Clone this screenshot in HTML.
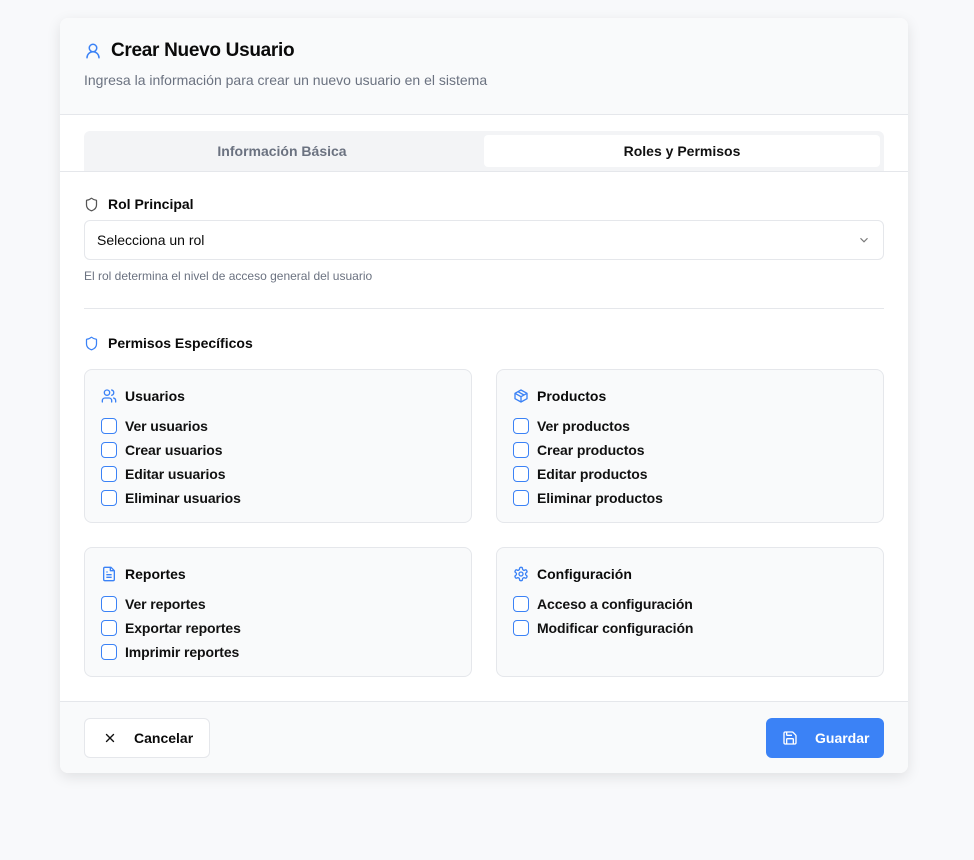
<!DOCTYPE html>
<html><head><meta charset="utf-8"><style>
*{box-sizing:border-box;margin:0;padding:0}
body{width:974px;height:860px;background:#f8f9fb;font-family:"Liberation Sans",sans-serif;color:#0a0a0a;position:relative}
.card{position:absolute;left:60px;top:18px;width:848px;height:755px;background:#fff;border-radius:8px;box-shadow:0 4px 14px rgba(0,0,0,.1);overflow:hidden}
.hdr{height:97px;background:#f9fafb;border-bottom:1px solid #e5e7eb;position:relative}
.title{position:absolute;left:24px;top:22px;display:flex;align-items:center;gap:9px;font-size:19px;font-weight:bold;letter-spacing:-.3px}
.sub{position:absolute;left:24px;top:54px;font-size:14px;color:#6b7280}
.tabsw{height:57px;border-bottom:1px solid #e5e7eb;position:relative}
.tabs{position:absolute;left:24px;top:16px;width:800px;height:40px;background:#f3f4f6;border-radius:6px 6px 0 0}
.tab{position:absolute;top:4px;height:32px;width:396px;font-size:14px;font-weight:bold;display:flex;align-items:center;justify-content:center}
.t1{left:0;color:#6b7280}.t2{left:400px;background:#fff;border-radius:4px;color:#111}
.lbl{position:absolute;left:24px;display:flex;align-items:center;gap:9px;font-size:14px;font-weight:bold}
.sel{position:absolute;left:24px;top:202px;width:800px;height:40px;border:1px solid #e5e7eb;border-radius:6px;font-size:14px;padding:0 12px;display:flex;align-items:center;justify-content:space-between}
.help{position:absolute;left:24px;top:251px;font-size:12px;color:#6b7280}
.hr{position:absolute;left:24px;top:290px;width:800px;height:1px;background:#e5e7eb}
.box{position:absolute;width:388px;background:#f9fafb;border:1px solid #e5e7eb;border-radius:8px;padding:0 16px}
.bh{display:flex;align-items:center;gap:8px;font-size:14px;font-weight:bold;margin-top:18px;margin-bottom:10px;height:16px}
.it{display:flex;align-items:center;gap:8px;font-size:14px;font-weight:bold;height:24px;color:#111;letter-spacing:-.1px}
.cb{width:16px;height:16px;border:1.3px solid #3b82f6;border-radius:4px;background:#fff}
.ftr{position:absolute;left:0;top:683px;width:848px;height:72px;background:#f9fafb;border-top:1px solid #e5e7eb}
.btn{position:absolute;top:16px;height:40px;border-radius:6px;font-size:14px;font-weight:bold;display:flex;align-items:center}
</style></head><body>
<div class="card">
<div class="hdr">
<div class="title"><svg width="18" height="18" viewBox="0 0 24 24" fill="none" stroke="#3b82f6" stroke-width="2" stroke-linecap="round"><circle cx="12" cy="8" r="5"/><path d="M20 21a8 8 0 0 0-16 0"/></svg>Crear Nuevo Usuario</div>
<div class="sub">Ingresa la información para crear un nuevo usuario en el sistema</div>
</div>
<div class="tabsw"><div class="tabs"><div class="tab t1">Información Básica</div><div class="tab t2">Roles y Permisos</div></div></div>
<div class="lbl" style="top:178px"><svg width="15" height="15" viewBox="0 0 24 24" fill="none" stroke="#555" stroke-width="2" stroke-linejoin="round"><path d="M20 13c0 5-3.5 7.5-7.7 9a1 1 0 0 1-.6 0C7.5 20.5 4 18 4 13V6a1 1 0 0 1 1-1c2 0 4.5-1.2 6.2-2.7a1.2 1.2 0 0 1 1.5 0C14.5 3.8 17 5 19 5a1 1 0 0 1 1 1z"/></svg>Rol Principal</div>
<div class="sel"><span>Selecciona un rol</span><svg width="14" height="14" viewBox="0 0 24 24" fill="none" stroke="#777" stroke-width="2"><path d="m6 9 6 6 6-6"/></svg></div>
<div class="help">El rol determina el nivel de acceso general del usuario</div>
<div class="hr"></div>
<div class="lbl" style="top:317px"><svg width="15" height="15" viewBox="0 0 24 24" fill="none" stroke="#3b82f6" stroke-width="2" stroke-linejoin="round"><path d="M20 13c0 5-3.5 7.5-7.7 9a1 1 0 0 1-.6 0C7.5 20.5 4 18 4 13V6a1 1 0 0 1 1-1c2 0 4.5-1.2 6.2-2.7a1.2 1.2 0 0 1 1.5 0C14.5 3.8 17 5 19 5a1 1 0 0 1 1 1z"/></svg>Permisos Específicos</div>

<div class="box" style="left:24px;top:351px;height:154px">
<div class="bh"><svg width="16" height="16" viewBox="0 0 24 24" fill="none" stroke="#3b82f6" stroke-width="2" stroke-linecap="round"><path d="M16 21v-2a4 4 0 0 0-4-4H6a4 4 0 0 0-4 4v2"/><circle cx="9" cy="7" r="4"/><path d="M22 21v-2a4 4 0 0 0-3-3.9M16 3.1a4 4 0 0 1 0 7.8"/></svg>Usuarios</div>
<div class="it"><span class="cb"></span>Ver usuarios</div><div class="it"><span class="cb"></span>Crear usuarios</div><div class="it"><span class="cb"></span>Editar usuarios</div><div class="it"><span class="cb"></span>Eliminar usuarios</div></div>

<div class="box" style="left:436px;top:351px;height:154px">
<div class="bh"><svg width="16" height="16" viewBox="0 0 24 24" fill="none" stroke="#3b82f6" stroke-width="2" stroke-linejoin="round"><path d="M21 8 12 3 3 8v8l9 5 9-5z"/><path d="M3 8l9 5 9-5M12 13v8M7.5 5.5l9 5"/></svg>Productos</div>
<div class="it"><span class="cb"></span>Ver productos</div><div class="it"><span class="cb"></span>Crear productos</div><div class="it"><span class="cb"></span>Editar productos</div><div class="it"><span class="cb"></span>Eliminar productos</div></div>

<div class="box" style="left:24px;top:529px;height:130px">
<div class="bh"><svg width="16" height="16" viewBox="0 0 24 24" fill="none" stroke="#3b82f6" stroke-width="2" stroke-linejoin="round"><path d="M15 2H6a2 2 0 0 0-2 2v16a2 2 0 0 0 2 2h12a2 2 0 0 0 2-2V7z"/><path d="M14 2v5h5M8 13h8M8 17h8M8 9h2"/></svg>Reportes</div>
<div class="it"><span class="cb"></span>Ver reportes</div><div class="it"><span class="cb"></span>Exportar reportes</div><div class="it"><span class="cb"></span>Imprimir reportes</div></div>

<div class="box" style="left:436px;top:529px;height:130px">
<div class="bh"><svg width="16" height="16" viewBox="0 0 24 24" fill="none" stroke="#3b82f6" stroke-width="2"><path d="M12.2 2h-.4a2 2 0 0 0-2 2v.2a2 2 0 0 1-1 1.7l-.4.3a2 2 0 0 1-2 0l-.2-.1a2 2 0 0 0-2.7.7l-.2.4a2 2 0 0 0 .7 2.7l.2.1a2 2 0 0 1 1 1.7v.5a2 2 0 0 1-1 1.8l-.2.1a2 2 0 0 0-.7 2.7l.2.4a2 2 0 0 0 2.700.7l.2-.1a2 2 0 0 1 2 0l.4.3a2 2 0 0 1 1 1.7v.2a2 2 0 0 0 2 2h.4a2 2 0 0 0 2-2v-.2a2 2 0 0 1 1-1.7l.4-.3a2 2 0 0 1 2 0l.2.1a2 2 0 0 0 2.7-.7l.2-.4a2 2 0 0 0-.7-2.7l-.2-.1a2 2 0 0 1-1-1.8v-.5a2 2 0 0 1 1-1.7l.2-.1a2 2 0 0 0 .7-2.7l-.2-.4a2 2 0 0 0-2.7-.7l-.2.1a2 2 0 0 1-2 0l-.4-.3a2 2 0 0 1-1-1.7V4a2 2 0 0 0-2-2z"/><circle cx="12" cy="12" r="3"/></svg>Configuración</div>
<div class="it"><span class="cb"></span>Acceso a configuración</div><div class="it"><span class="cb"></span>Modificar configuración</div></div>

<div class="ftr">
<div class="btn" style="left:24px;width:126px;background:#fff;border:1px solid #e5e7eb;padding-left:18px;gap:17px"><svg width="14" height="14" viewBox="0 0 24 24" fill="none" stroke="#111" stroke-width="2.4" stroke-linecap="round"><path d="M18 6 6 18M6 6l12 12"/></svg>Cancelar</div>
<div class="btn" style="left:706px;width:118px;background:#3b82f6;color:#fff;padding-left:16px;gap:17px"><svg width="16" height="16" viewBox="0 0 24 24" fill="none" stroke="#fff" stroke-width="2" stroke-linejoin="round"><path d="M15.2 3a2 2 0 0 1 1.4.6l3.8 3.8a2 2 0 0 1 .6 1.4V19a2 2 0 0 1-2 2H5a2 2 0 0 1-2-2V5a2 2 0 0 1 2-2z"/><path d="M17 21v-7a1 1 0 0 0-1-1H8a1 1 0 0 0-1 1v7M7 3v4a1 1 0 0 0 1 1h7"/></svg>Guardar</div>
</div>
</div>
</body></html>
